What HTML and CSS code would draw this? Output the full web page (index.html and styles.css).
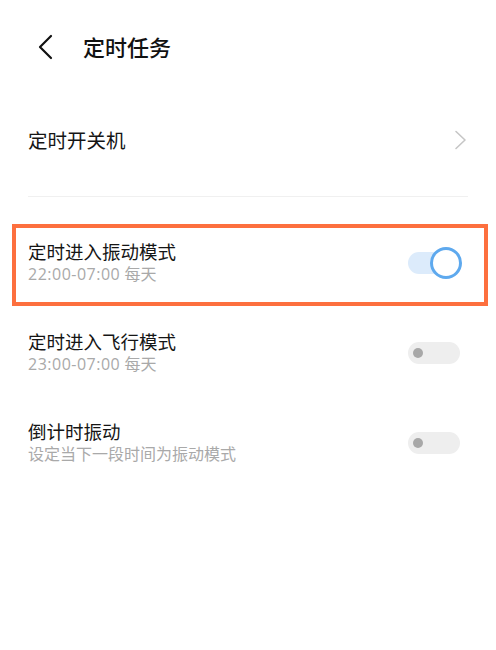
FILE: index.html
```html
<!DOCTYPE html>
<html lang="zh-CN">
<head>
<meta charset="utf-8">
<title>定时任务</title>
<link rel="stylesheet" href="styles.css">
</head>
<body>
<div class="page">
  <header class="header">
    <svg class="back" width="18" height="26" viewBox="0 0 18 26"><path d="M15 2 L4 13 L15 24" fill="none" stroke="#111" stroke-width="2.2" stroke-linecap="round" stroke-linejoin="round"/></svg>
    <h1 class="title">定时任务</h1>
  </header>

  <div class="row row-link">
    <span class="row-title big">定时开关机</span>
    <svg class="chev" width="14" height="20" viewBox="0 0 14 20"><path d="M2 1.5 L11 10 L2 18.5" fill="none" stroke="#c6c6c6" stroke-width="1.6" stroke-linecap="round" stroke-linejoin="round"/></svg>
  </div>

  <div class="row row-switch highlight">
    <div class="texts">
      <div class="row-title">定时进入振动模式</div>
      <div class="row-sub"><span class="time">22:00-07:00</span> 每天</div>
    </div>
    <span class="switch on"><span class="knob"></span></span>
  </div>

  <div class="row row-switch">
    <div class="texts">
      <div class="row-title">定时进入飞行模式</div>
      <div class="row-sub"><span class="time">23:00-07:00</span> 每天</div>
    </div>
    <span class="switch"><span class="knob"></span></span>
  </div>

  <div class="row row-switch">
    <div class="texts">
      <div class="row-title">倒计时振动</div>
      <div class="row-sub">设定当下一段时间为振动模式</div>
    </div>
    <span class="switch"><span class="knob"></span></span>
  </div>
</div>
</body>
</html>
```
FILE: styles.css
```css
* { box-sizing: border-box; }
html, body { margin: 0; padding: 0; background: #ffffff; }
body {
  font-family: "Noto Sans CJK SC", "Noto Sans", sans-serif;
  color: #151515;
  width: 496px;
  height: 650px;
  overflow: hidden;
}
.header {
  height: 92px;
  display: flex;
  align-items: center;
  padding-left: 36px;
}
.back { display: block; margin-top: 1px; }
.title {
  margin: 0 0 0 29px;
  font-size: 22px;
  font-weight: 500;
  line-height: 30px;
  color: #111;
}
.row-link {
  margin: 0 28px 27px;
  padding: 34px 0 42px;
  border-bottom: 1px solid #f0f0f0;
  display: flex;
  align-items: center;
  justify-content: space-between;
}
.row-title {
  font-size: 18.5px;
  line-height: 23px;
  color: #151515;
}
.row-title.big { font-size: 19.5px; line-height: 28px; }
.chev { display: block; }
.row-switch {
  display: flex;
  align-items: center;
  justify-content: space-between;
  padding: 24px 36px 21px 28px;
}
.row-sub {
  font-family: "Open Sans", "Noto Sans CJK SC", sans-serif;
  font-size: 16px;
  line-height: 21px;
  color: #a9a9a9;
  margin-top: 1px;
}
.time { letter-spacing: 0.5px; }
.highlight {
  margin: 0 8px 0 12px;
  border: 4px solid #fd6f3e;
  padding: 12px 24px 17px 12px;
}
.switch {
  position: relative;
  width: 52px;
  height: 22px;
  border-radius: 11px;
  background: #eeeeee;
  flex-shrink: 0;
}
.switch .knob {
  position: absolute;
  left: 5px;
  top: 6px;
  width: 10px;
  height: 10px;
  border-radius: 50%;
  background: #a8a8a8;
}
.switch.on { background: #dcebfb; }
.switch.on .knob {
  left: 22px;
  top: -5px;
  width: 32px;
  height: 32px;
  background: #ffffff;
  border: 3.5px solid #5ea9ee;
}
```
